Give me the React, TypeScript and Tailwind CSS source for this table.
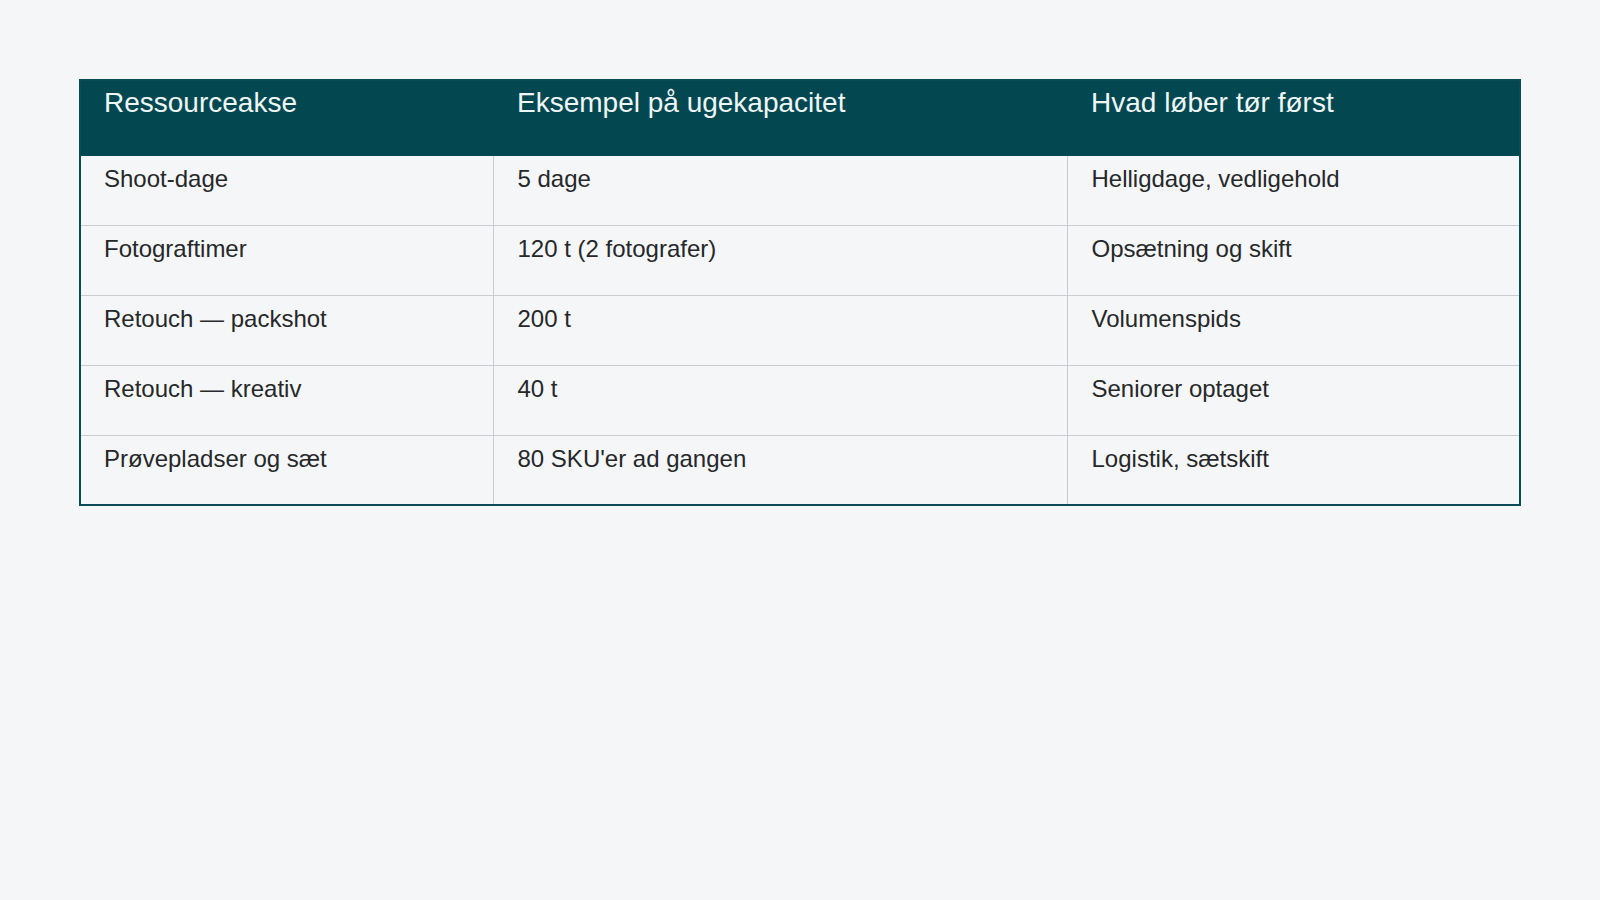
const rows = [
  ['Shoot-dage', '5 dage', 'Helligdage, vedligehold'],
  ['Fotograftimer', '120 t (2 fotografer)', 'Opsætning og skift'],
  ['Retouch — packshot', '200 t', 'Volumenspids'],
  ['Retouch — kreativ', '40 t', 'Seniorer optaget'],
  ['Prøvepladser og sæt', "80 SKU'er ad gangen", 'Logistik, sætskift'],
]

export default function App() {
  return (
    <div className="min-h-screen bg-[#f4f6f8] px-[79px] pt-[79px] font-['Liberation_Sans',Arial,sans-serif]">
      <table className="w-full border-collapse border-2 border-[#0b4b55]">
        <thead>
          <tr className="bg-[#034851] text-[#eef6f6]">
            <th className="w-[413px] h-[76px] pl-[23px] pr-6 pt-[5px] text-left align-top text-[28px] font-normal leading-[1.2]">Ressourceakse</th>
            <th className="w-[574px] px-6 pt-[5px] text-left align-top text-[28px] font-normal leading-[1.2]">Eksempel på ugekapacitet</th>
            <th className="px-6 pt-[5px] text-left align-top text-[28px] font-normal leading-[1.2]">Hvad løber tør først</th>
          </tr>
        </thead>
        <tbody className="text-[24px] leading-[1.2] text-[#262829]">
          {rows.map((r, i) => (
            <tr key={i} className="h-[70px] first:h-[69px] border-t border-[#c9ccd0] first:border-t-0">
              {r.map((c, j) => (
                <td key={j} className={`pr-6 pt-[9px] align-top ${j > 0 ? 'pl-6 border-l border-[#c9ccd0]' : 'pl-[23px]'}`}>
                  {c}
                </td>
              ))}
            </tr>
          ))}
        </tbody>
      </table>
    </div>
  )
}
